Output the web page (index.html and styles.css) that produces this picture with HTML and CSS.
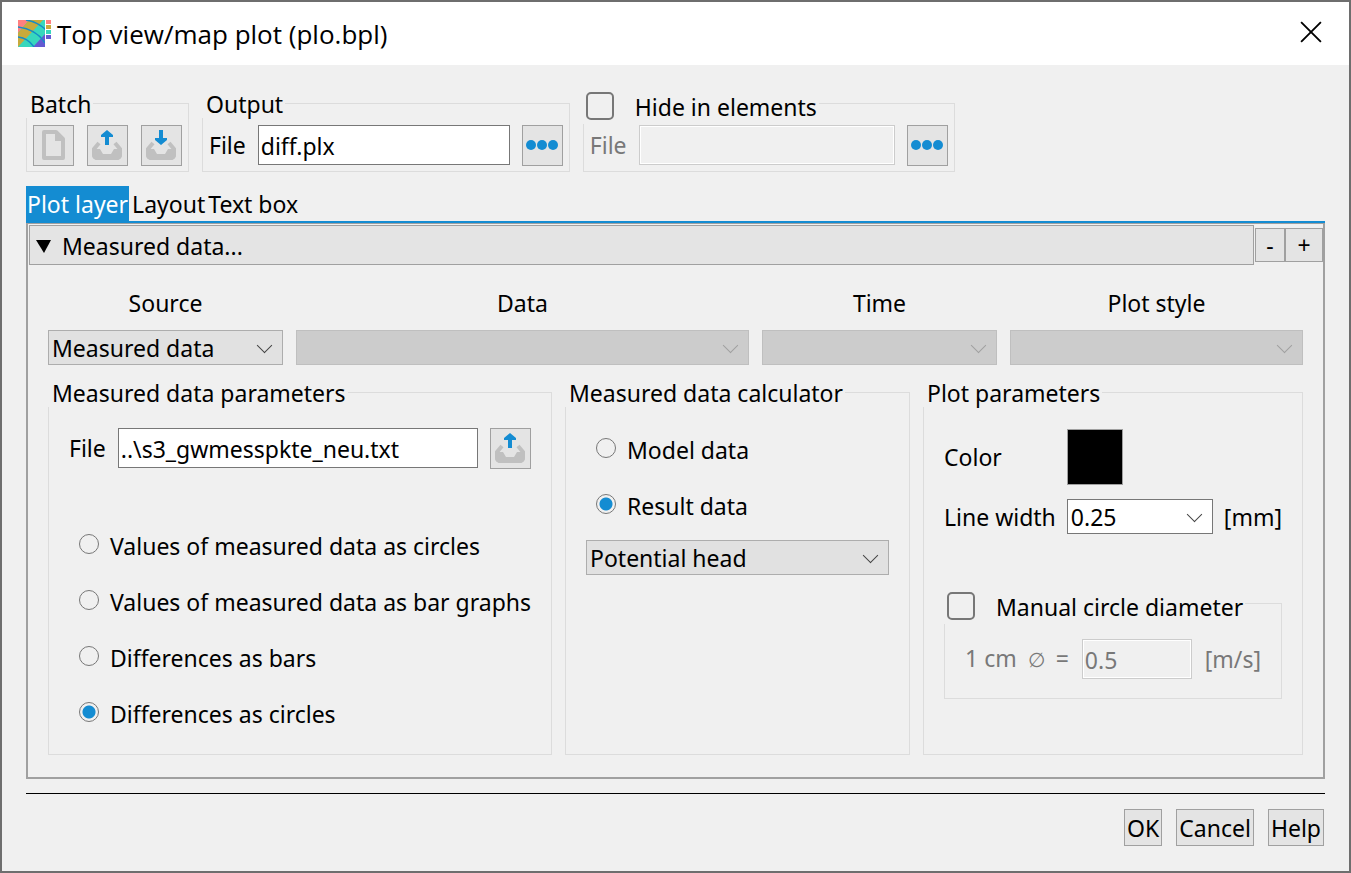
FILE: index.html
```html
<!DOCTYPE html>
<html lang="en">
<head>
    <meta charset="UTF-8">
    <meta name="viewport" content="width=device-width, initial-scale=1.0">
    <title>Top view/map plot (plo.bpl)</title>
    <link rel="stylesheet" href="styles.css">
</head>
<body>
    <!-- shared icons -->
    <svg class="sprite" aria-hidden="true">
        <symbol id="tray" viewBox="0 0 30 30">
            <path d="M7 13 L2 19 V24 Q2 28 6 28 H24 Q28 28 28 24 V19 L23 13" fill="none" stroke="#c0c0c0" stroke-width="4"/>
            <path d="M0 19 H8 L11 24 H19 L22 19 H30 V24 Q30 30 24 30 H6 Q0 30 0 24 Z" fill="#c0c0c0"/>
        </symbol>
        <symbol id="load" viewBox="0 0 30 30">
            <use href="#tray"/>
            <path d="M15 0 L21 5 V7 H17 V15 H13 V7 H9 V5 Z" fill="#148cd2"/>
        </symbol>
        <symbol id="save" viewBox="0 0 30 30">
            <use href="#tray"/>
            <path d="M13 0 H17 V8 H21 V10 L15 15 L9 10 V8 H13 Z" fill="#148cd2"/>
        </symbol>
        <symbol id="dots" viewBox="0 0 32 30">
            <circle cx="5" cy="15" r="5" fill="#148cd2"/>
            <circle cx="16" cy="15" r="5" fill="#148cd2"/>
            <circle cx="27" cy="15" r="5" fill="#148cd2"/>
        </symbol>
    </svg>

    <div class="dialog">
        <header class="titlebar">
            <svg class="app-icon" viewBox="0 0 34 28">
                <clipPath id="map"><rect width="27" height="27"/></clipPath>
                <g clip-path="url(#map)">
                    <rect width="27" height="27" fill="#37d7bd"/>
                    <path d="M0 0 H11 L0 13 Z" fill="#ff8080"/>
                    <path d="M11 0 H25 L0 27 V13 Z" fill="#c8aa3c"/>
                    <path d="M27 14 V27 H15 Z" fill="#645ad2"/>
                    <path d="M8 0 Q20 2 28 10 M0 7 Q18 9 27 23 M0 17 Q10 18 16 27" fill="none" stroke="#148cc8" stroke-width="1.500"/>
                </g>
                <rect x="28" width="5" height="4" fill="#ff8080"/>
                <rect x="28" y="5" width="5" height="4" fill="#c8aa3c"/>
                <rect x="28" y="10" width="5" height="4" fill="#37d7bd"/>
                <rect x="28" y="15" width="5" height="4" fill="#645ad2"/>
            </svg>
            <h1>Top view/map plot (plo.bpl)</h1>
            <button class="close" aria-label="Close">
                <svg viewBox="0 0 20 20"><path d="M1 1 L19 19 M19 1 L1 19" stroke="#000" stroke-width="1.700"/></svg>
            </button>
        </header>

        <main class="content">
            <div class="toolbar">
                <fieldset class="group">
                    <legend>Batch</legend>
                    <div class="tools batch">
                        <button class="icon-btn" aria-label="New">
                            <svg viewBox="0 0 30 30"><path d="M6 2 H18 L25 9 V28 H6 Z" fill="none" stroke="#c0c0c0" stroke-width="4" stroke-linejoin="round"/><path d="M17 1 V11 H26 V9 L18 1 Z" fill="#c0c0c0"/></svg>
                        </button>
                        <button class="icon-btn" aria-label="Load"><svg><use href="#load"/></svg></button>
                        <button class="icon-btn" aria-label="Save"><svg><use href="#save"/></svg></button>
                    </div>
                </fieldset>
                <fieldset class="group">
                    <legend>Output</legend>
                    <div class="tools">
                        <label for="out-file">File</label>
                        <input class="text out" id="out-file" type="text" value="diff.plx">
                        <button class="icon-btn" aria-label="Browse"><svg class="dots"><use href="#dots"/></svg></button>
                    </div>
                </fieldset>
                <fieldset class="group">
                    <legend class="check"><input type="checkbox" id="hide"><label for="hide">Hide in elements</label></legend>
                    <div class="tools">
                        <label class="off" for="hide-file">File</label>
                        <input class="text hide" id="hide-file" type="text" disabled>
                        <button class="icon-btn" aria-label="Browse"><svg class="dots"><use href="#dots"/></svg></button>
                    </div>
                </fieldset>
            </div>

            <nav class="tabs">
                <a class="active" href="#layer">Plot layer</a>
                <a href="#layout">Layout</a>
                <a href="#textbox">Text box</a>
            </nav>

            <section class="panel" id="layer">
                <div class="layer-head">
                    <button class="toggle"><svg viewBox="0 0 16 14"><path d="M0 1 H15 L8 14 Z"/></svg>Measured data...</button>
                    <button class="step">-</button>
                    <button class="step plus">+</button>
                </div>

                <div class="sources">
                    <div>
                        <label for="source">Source</label>
                        <span class="select"><select id="source"><option>Measured data</option></select></span>
                    </div>
                    <div>
                        <label for="data">Data</label>
                        <span class="select off"><select id="data" disabled></select></span>
                    </div>
                    <div>
                        <label for="time">Time</label>
                        <span class="select off"><select id="time" disabled></select></span>
                    </div>
                    <div>
                        <label for="style">Plot style</label>
                        <span class="select off"><select id="style" disabled></select></span>
                    </div>
                </div>

                <div class="params">
                    <fieldset class="group">
                        <legend>Measured data parameters</legend>
                        <div class="file-row">
                            <label for="file">File</label>
                            <input class="text" id="file" type="text" value="..\s3_gwmesspkte_neu.txt">
                            <button class="icon-btn" aria-label="Load"><svg><use href="#load"/></svg></button>
                        </div>
                        <div class="radios">
                            <label><input type="radio" name="mode"><span>Values of measured data as circles</span></label>
                            <label><input type="radio" name="mode"><span>Values of measured data as bar graphs</span></label>
                            <label><input type="radio" name="mode"><span>Differences as bars</span></label>
                            <label><input type="radio" name="mode" checked><span>Differences as circles</span></label>
                        </div>
                    </fieldset>

                    <fieldset class="group calc">
                        <legend>Measured data calculator</legend>
                        <div class="radios">
                            <label><input type="radio" name="calc"><span>Model data</span></label>
                            <label><input type="radio" name="calc" checked><span>Result data</span></label>
                        </div>
                        <span class="select"><select aria-label="Result"><option>Potential head</option></select></span>
                    </fieldset>

                    <fieldset class="group">
                        <legend>Plot parameters</legend>
                        <div class="plot-grid">
                            <label for="color">Color</label>
                            <button class="swatch" id="color"></button>
                            <span></span>
                            <label for="width">Line width</label>
                            <span class="select edit"><select id="width"><option>0.25</option></select></span>
                            <span>[mm]</span>
                        </div>
                        <fieldset class="group diameter">
                            <legend class="check"><input type="checkbox" id="manual"><label for="manual">Manual circle diameter</label></legend>
                            <div class="diameter-row off">
                                <label for="diam">1 cm <span class="symbol">∅</span> =</label>
                                <input class="text" id="diam" type="text" value="0.5" disabled>
                                <span>[m/s]</span>
                            </div>
                        </fieldset>
                    </fieldset>
                </div>
            </section>

            <footer class="actions">
                <button>OK</button>
                <button>Cancel</button>
                <button>Help</button>
            </footer>
        </main>
    </div>
</body>
</html>
```
FILE: styles.css
```css
* {
    box-sizing: border-box;
}
body {
    margin: 0;
    background: #f0f0f0;
    color: #000;
    font: 23px/30px "Noto Sans", sans-serif;
}
button, input, select {
    margin: 0;
    padding: 0;
    border-radius: 0;
    color: inherit;
    font: inherit;
}
button {
    background: #e4e4e4;
    border: 1px solid #a0a0a0;
}
label, span, h1, button {
    white-space: nowrap;
}
.sprite {
    position: absolute;
    width: 0;
    height: 0;
}
.dialog {
    min-height: 100vh;
    border: 2px solid #6e6e6e;
}

/* title bar */
.titlebar {
    display: flex;
    align-items: center;
    height: 63px;
    padding: 0 27px 0 16px;
    background: #fff;
}
.app-icon {
    width: 34px;
    height: 28px;
}
.titlebar h1 {
    flex: 1;
    margin: 0 0 0 5px;
    font: 26px/36px "Open Sans", sans-serif;
}
.close {
    display: flex;
    padding-bottom: 3px;
    background: none;
    border: 0;
}
.close svg {
    width: 22px;
    height: 22px;
}

.content {
    padding: 17px 24px 25px;
}

/* group boxes */
.group {
    min-width: 0;
    margin: 0;
    padding: 0;
    border: 1px solid #dcdcdc;
}
legend {
    height: 30px;
    margin-left: -1px;
    padding: 1px 2px 0 4px;
    background: #f0f0f0;
}
legend.check {
    display: flex;
    align-items: center;
    gap: 21px;
    height: 42px;
    padding: 6px 2px 0 3px;
}
.check label {
    padding-top: 2px;
}
input[type="checkbox"] {
    appearance: none;
    width: 28px;
    height: 28px;
    border: 2px solid #777;
    border-radius: 5px;
}
.off {
    color: #787878;
}

.toolbar {
    display: flex;
    align-items: flex-end;
    gap: 13px;
}
.tools, .file-row {
    display: flex;
    align-items: flex-start;
    gap: 12px;
    line-height: 41px;
}
.tools {
    padding: 7px 6px 5px;
}
.batch {
    gap: 13px;
}
.check + .tools {
    padding-top: 1px;
}
.icon-btn {
    display: flex;
    align-items: center;
    justify-content: center;
    flex: none;
    width: 41px;
    height: 41px;
    padding: 0 1px 1px 0;
}
.icon-btn svg {
    width: 30px;
    height: 30px;
}
.icon-btn .dots {
    width: 34px;
}
.text {
    width: 100%;
    min-width: 0;
    height: 40px;
    padding: 2px 2px 0;
    background: #fff;
    border: 1px solid #777;
    line-height: 30px;
}
.text:disabled {
    background: #f0f0f0;
    border-color: #ccc;
    box-shadow: inset 0 0 0 1px #fff;
    color: #787878;
}
.text.out {
    width: 252px;
}
.text.hide {
    width: 256px;
}

/* tabs */
.tabs {
    display: flex;
    gap: 3px;
    margin-top: 14px;
    border-bottom: 2px solid #148cd2;
}
.tabs a {
    padding: 3px 0 2px;
    color: #000;
    text-decoration: none;
}
.tabs .active {
    padding: 3px 1px 2px;
    background: #148cd2;
    color: #fff;
}
.panel {
    border: 2px solid #a0a0a0;
    border-top-width: 1px;
}
.layer-head {
    display: flex;
    align-items: center;
    padding: 1px 0 0 1px;
}
.toggle {
    display: flex;
    align-items: center;
    flex: 1;
    gap: 10px;
    height: 40px;
    margin-right: 1px;
    padding: 2px 6px 0;
}
.toggle svg {
    width: 16px;
    height: 14px;
}
.step {
    width: 30px;
    height: 34px;
}
.step.plus {
    width: 38px;
}

.sources {
    display: grid;
    grid-template-columns: 235fr 453fr 235fr 293fr;
    gap: 13px;
    padding: 23px 20px 0;
}
.sources label {
    display: block;
    margin-bottom: 12px;
    text-align: center;
}

/* drop-downs */
.select {
    display: block;
    position: relative;
}
.select select {
    display: block;
    appearance: none;
    width: 100%;
    height: 35px;
    padding: 0 30px 0 3px;
    background: #e1e1e1;
    border: 1px solid #adadad;
}
.select::after {
    content: "";
    position: absolute;
    top: 10px;
    right: 13px;
    width: 10px;
    height: 10px;
    border: solid #444;
    border-width: 0 1px 1px 0;
    transform: rotate(45deg);
    pointer-events: none;
}
.select.off select {
    background: #ccc;
    border-color: #bfbfbf;
    opacity: 1;
}
.select.off::after {
    border-color: #a0a0a0;
}
.select.edit select {
    background: #fff;
    border-color: #777;
}

.params {
    display: grid;
    grid-template-columns: 504fr 345fr 380fr;
    gap: 13px;
    padding: 12px 20px 22px;
}
.params > .group {
    padding: 0 20px 14px;
}
.params > .group > legend {
    margin-left: -21px;
}
.file-row {
    padding: 21px 0 47px;
}
.radios label {
    display: flex;
    align-items: center;
    gap: 11px;
    height: 56px;
    padding-left: 10px;
}
.radios span {
    padding-top: 4px;
}
input[type="radio"] {
    appearance: none;
    flex: none;
    width: 20px;
    height: 20px;
    border: 1px solid #777;
    border-radius: 50%;
}
input[type="radio"]:checked {
    background: radial-gradient(#148cd2 6px, transparent 7px);
}
.calc .radios {
    padding: 13px 0 8px;
}

.plot-grid {
    display: grid;
    grid-template-columns: auto 1fr auto;
    align-items: center;
    gap: 14px 11px;
    padding-top: 22px;
}
.swatch {
    width: 56px;
    height: 56px;
    background: #000;
}
.diameter {
    margin-top: 48px;
}
.diameter-row {
    display: flex;
    align-items: center;
    gap: 13px;
    padding: 15px 20px 19px;
}
.symbol {
    margin: 0 5px;
    font-size: 20px;
}

/* buttons at the bottom */
.actions {
    display: flex;
    justify-content: flex-end;
    gap: 14px;
    margin-top: 14px;
    padding: 15px 1px 0;
    border-top: 1px solid #000;
}
.actions button {
    height: 37px;
    padding: 0 2px;
}
```
